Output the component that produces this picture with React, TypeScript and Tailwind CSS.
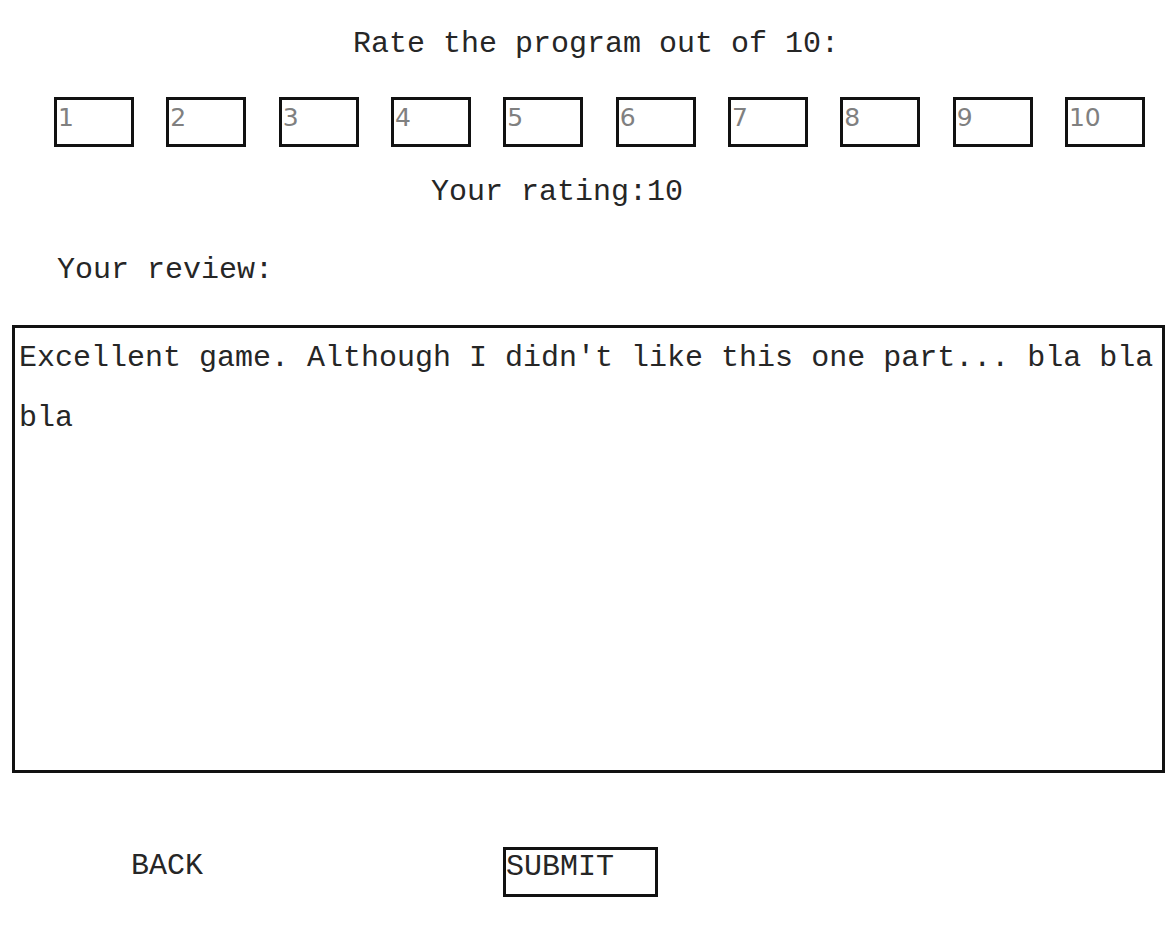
import React, { useState } from 'react';

const mono = { fontFamily: '"Liberation Mono", "Courier New", monospace' };

export default function App() {
  const [rating, setRating] = useState(10);
  const [review, setReview] = useState("Excellent game. Although I didn't like this one part... bla bla bla");

  return (
    <div
      style={mono}
      className="w-[1172px] h-[937px] bg-white text-[#262626] flex flex-col text-[30px] leading-[34px]"
    >
      <div className="pt-[27px] pl-[20px] text-center">Rate the program out of 10:</div>

      <div className="mt-[36px] flex justify-between pl-[54px] pr-[27px]">
        {Array.from({ length: 10 }, (_, i) => i + 1).map((n) => (
          <button
            key={n}
            onClick={() => setRating(n)}
            className="w-[80px] h-[50px] border-[3px] border-[#111] bg-white flex items-start pl-[1px] pt-[3px] text-[25px] leading-[30px] text-[#808080] font-['DejaVu_Sans',_sans-serif]"
          >
            {n}
          </button>
        ))}
      </div>

      <div className="mt-[28px] pr-[58px] text-center">Your rating:{rating}</div>

      <div className="mt-[44px] pl-[57px]">Your review:</div>

      <textarea
        value={review}
        onChange={(e) => setReview(e.target.value)}
        style={mono}
        className="mt-[38px] ml-[12px] w-[1153px] h-[448px] border-[3px] border-[#111] pl-[4px] pt-0 text-[30px] leading-[60px] text-[#262626] resize-none outline-none"
      />

      <div className="mt-[74px] flex items-start pl-[131px] gap-[300px]">
        <button style={mono} className="pt-[2px] bg-white text-[#262626]">BACK</button>
        <button
          style={mono}
          className="w-[155px] h-[50px] border-[3px] border-[#111] bg-white text-left pl-0 pt-0 leading-[34px] text-[#262626] flex items-start"
        >
          SUBMIT
        </button>
      </div>
    </div>
  );
}
